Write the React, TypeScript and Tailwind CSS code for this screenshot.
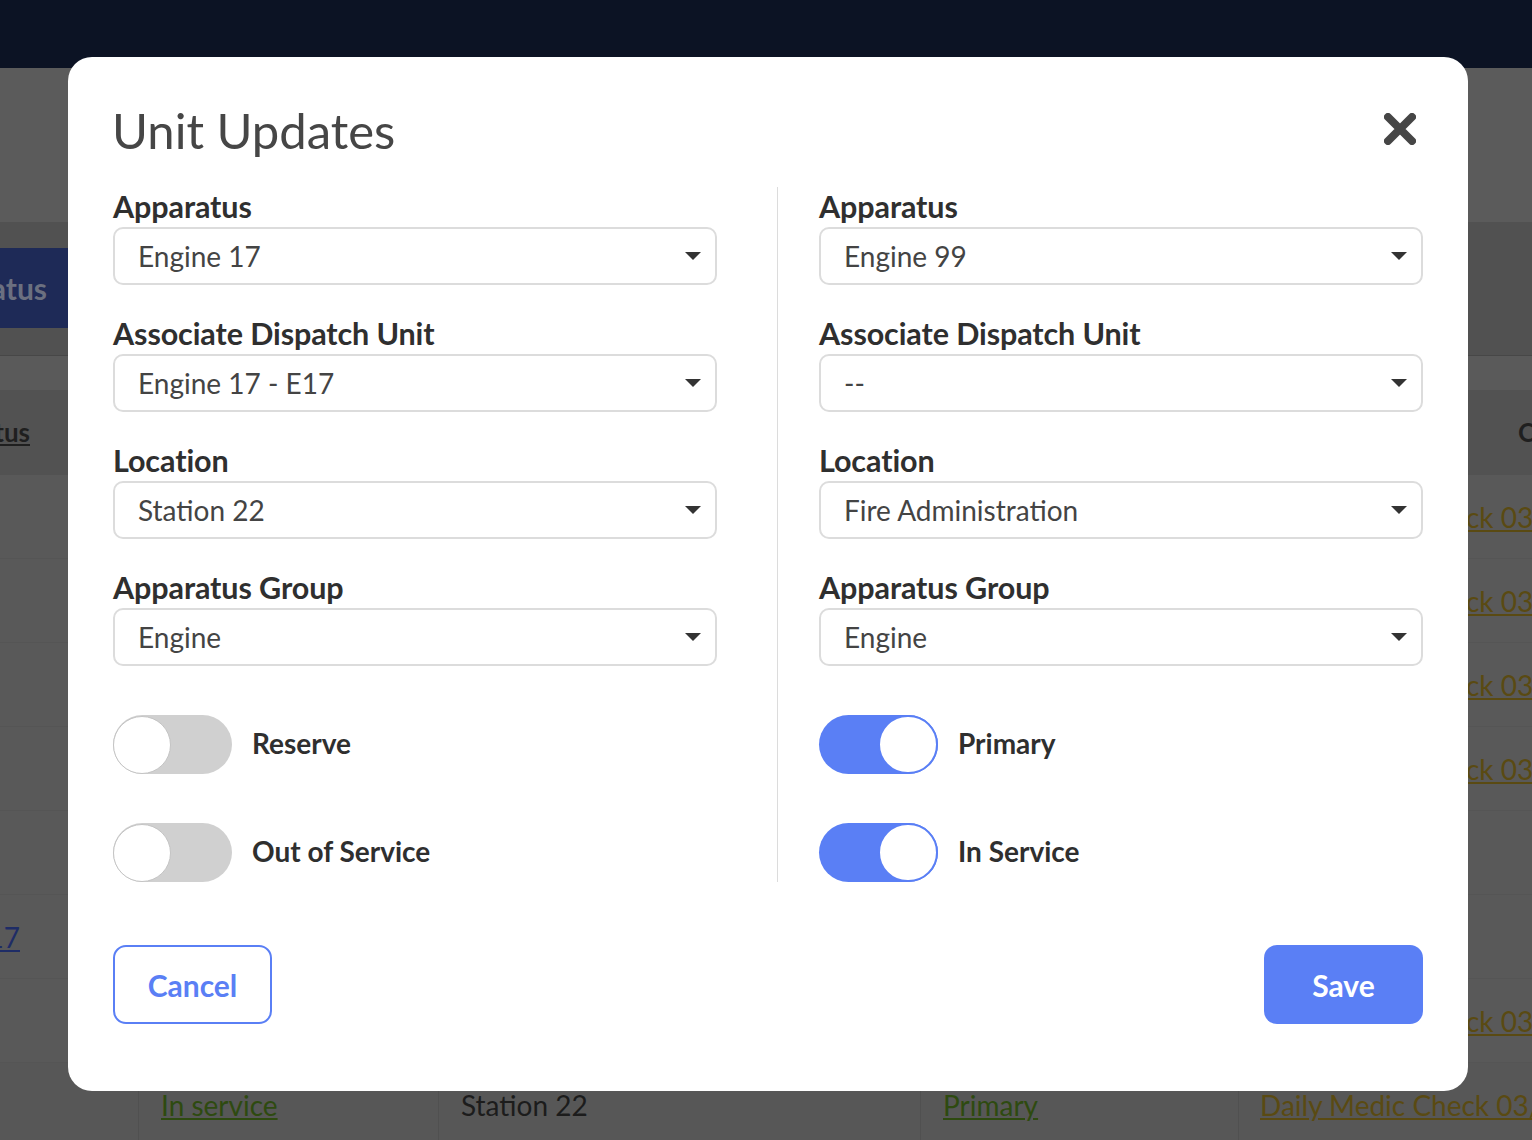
import { useState } from 'react'

type Field = { label: string; value: string }

const LEFT_FIELDS: Field[] = [
  { label: 'Apparatus', value: 'Engine 17' },
  { label: 'Associate Dispatch Unit', value: 'Engine 17 - E17' },
  { label: 'Location', value: 'Station 22' },
  { label: 'Apparatus Group', value: 'Engine' },
]

const RIGHT_FIELDS: Field[] = [
  { label: 'Apparatus', value: 'Engine 99' },
  { label: 'Associate Dispatch Unit', value: '--' },
  { label: 'Location', value: 'Fire Administration' },
  { label: 'Apparatus Group', value: 'Engine' },
]

function SelectField({ label, value }: Field) {
  return (
    <div className="flex flex-col">
      <div className="h-[36px] mb-[4px] text-[30.5px] leading-[38px] font-bold text-[#2f2f2f] tracking-[-0.1px]">{label}</div>
      <div className="h-[58px] flex items-center justify-between rounded-[10px] border-2 border-[#dcdcdc] pl-[23px] pr-[14px]">
        <span className="text-[28px] text-[#444]">{value}</span>
        <svg width="16" height="8" viewBox="0 0 16 8">
          <path d="M0 0 L16 0 L8 8 Z" fill="#333" />
        </svg>
      </div>
    </div>
  )
}

function Toggle({ label, initial }: { label: string; initial: boolean }) {
  const [on, setOn] = useState(initial)
  return (
    <div className="flex items-center h-[59px]">
      <button
        onClick={() => setOn(!on)}
        className={
          on
            ? 'w-[119px] h-[59px] rounded-full bg-[#5a7ff5] flex justify-end items-center'
            : 'w-[119px] h-[59px] rounded-full bg-[#d0d0d0] flex justify-start items-center'
        }
      >
        <span
          className={
            on
              ? 'w-[60px] h-[59px] rounded-full bg-white border-2 border-[#5a7ff5]'
              : 'w-[58px] h-[58px] rounded-full bg-white border border-[#c4c4c4]'
          }
        />
      </button>
      <span className="ml-[20px] text-[28px] leading-[34px] -mt-[3px] font-bold text-[#2f2f2f]">{label}</span>
    </div>
  )
}

function Column({ fields, toggles }: { fields: Field[]; toggles: { label: string; on: boolean }[] }) {
  return (
    <div className="w-[604px] flex flex-col">
      <div className="flex flex-col gap-[29px]">
        {fields.map(f => (
          <SelectField key={f.label} {...f} />
        ))}
      </div>
      <div className="mt-[49px] flex flex-col gap-[49px]">
        {toggles.map(t => (
          <Toggle key={t.label} label={t.label} initial={t.on} />
        ))}
      </div>
    </div>
  )
}

function Backdrop() {
  return (
    <div className="flex flex-col w-full h-full">
      <div className="h-[68px] bg-[#0c1324] shrink-0" />
      <div className="h-[154px] bg-[#5b5b5b] shrink-0" />
      <div className="h-[133px] bg-[#515151] shrink-0 pt-[26px] flex justify-between">
        <div className="w-[68px] h-[80px] bg-[#1e2a57] overflow-hidden flex justify-end items-center pr-[21px]">
          <span className="whitespace-nowrap text-[30px] font-bold text-[#6b7080]">Status</span>
        </div>
      </div>
      <div className="h-[35px] bg-[#5a5a5a] border-t border-[#474747] shrink-0" />
      <div className="h-[85px] bg-[#525252] shrink-0 flex items-center justify-between">
        <div className="w-[40px] overflow-hidden flex justify-end">
          <span className="whitespace-nowrap text-[26px] font-bold text-[#1f1f1f] underline pr-[10px]">Status</span>
        </div>
        <span className="w-[14px] overflow-hidden whitespace-nowrap text-[26px] font-bold text-[#1f1f1f]">Check</span>
      </div>
      {[0, 1, 2, 3, 4, 5, 6].map(i => (
        <div
          key={i}
          className="h-[84px] shrink-0 bg-[#595959] border-b border-[#555] flex items-center justify-between"
        >
          <div className="w-[30px] overflow-hidden flex justify-end">
            {i === 5 && (
              <span className="whitespace-nowrap text-[28px] text-[#1e2c66] underline pr-[10px]">E17</span>
            )}
          </div>
          <div className="w-[64px] overflow-hidden">
            {(i < 4 || i === 6) && (
              <span className="whitespace-nowrap text-[28px] text-[#5a4a12] underline -ml-[2px]">ck 03/</span>
            )}
          </div>
        </div>
      ))}
      <div className="h-[84px] shrink-0 bg-[#575757] flex items-stretch text-[28px]">
        <div className="w-[139px] border-r border-[#505050]" />
        <div className="w-[300px] border-r border-[#505050] pl-[22px] flex items-center">
          <span className="text-[#2e4a10] underline">In service</span>
        </div>
        <div className="w-[482px] border-r border-[#505050] pl-[22px] flex items-center">
          <span className="text-[#1c1c1c]">Station 22</span>
        </div>
        <div className="w-[318px] border-r border-[#505050] pl-[22px] flex items-center">
          <span className="text-[#2e4a10] underline">Primary</span>
        </div>
        <div className="flex-1 pl-[21px] overflow-hidden flex items-center">
          <span className="whitespace-nowrap text-[#5a4a12] underline">Daily Medic Check 03/</span>
        </div>
      </div>
    </div>
  )
}

export default function App() {
  return (
    <div className="relative w-[1532px] h-[1140px] overflow-hidden font-['Lato','Open_Sans',sans-serif]">
      <Backdrop />

      {/* modal */}
      <div className="absolute left-[68px] top-[57px] w-[1400px] h-[1034px] bg-white rounded-[24px] px-[45px] pt-[44px]">
        <div className="flex items-start justify-between">
          <h1 className="text-[49px] leading-[58px] text-[#464646] -ml-[1px]">Unit Updates</h1>
          <button className="mt-[12px] mr-[7px]">
            <svg width="32" height="32" viewBox="0 0 32 32">
              <path d="M4 4 L28 28 M28 4 L4 28" stroke="#464646" strokeWidth="8" strokeLinecap="round" />
            </svg>
          </button>
        </div>

        <div className="mt-[28px] flex">
          <Column
            fields={LEFT_FIELDS}
            toggles={[
              { label: 'Reserve', on: false },
              { label: 'Out of Service', on: false },
            ]}
          />
          <div className="w-[60px]" />
          <div className="w-px bg-[#dcdcdc]" />
          <div className="w-[41px]" />
          <Column
            fields={RIGHT_FIELDS}
            toggles={[
              { label: 'Primary', on: true },
              { label: 'In Service', on: true },
            ]}
          />
        </div>

        <div className="mt-[63px] flex justify-between">
          <button className="w-[159px] h-[79px] rounded-[13px] border-2 border-[#5a7ff5] text-[30px] font-bold text-[#5a7ff5] pt-[2px]">
            Cancel
          </button>
          <button className="w-[159px] h-[79px] rounded-[13px] bg-[#5a7ff5] text-[30px] font-bold text-white pt-[2px]">
            Save
          </button>
        </div>
      </div>
    </div>
  )
}
